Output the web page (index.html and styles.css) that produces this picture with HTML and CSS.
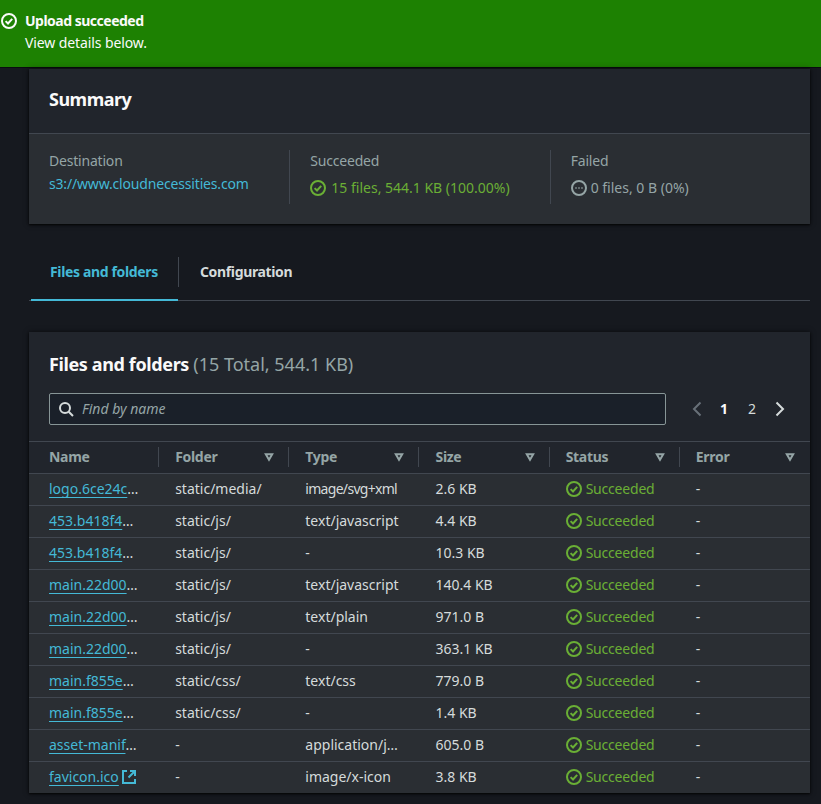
FILE: index.html
```html
<!DOCTYPE html>
<html lang="en">
<head>
<meta charset="utf-8">
<title>Upload: status</title>
<link rel="stylesheet" href="styles.css">
</head>
<body>
<svg class="defs" width="0" height="0" aria-hidden="true">
  <symbol id="i-ok" viewBox="0 0 16 16"><circle cx="8" cy="8" r="7"/><path d="M4.6 8.1l2.4 2.4 4.2-4.6"/></symbol>
  <symbol id="i-filter" viewBox="0 0 16 16"><path d="M4.8 5.2h6.4L8 10.8z"/></symbol>
</svg>
<div class="flash">
  <svg class="icon"><use href="#i-ok"/></svg>
  <div class="flash-text"><strong>Upload succeeded</strong><span>View details below.</span></div>
</div>
<main class="page">
  <section class="card summary">
    <h2 class="card-head">Summary</h2>
    <div class="summary-body">
      <div class="stat">
        <div class="label">Destination</div>
        <a class="link value-link">s3://www.cloudnecessities.com</a>
      </div>
      <div class="stat">
        <div class="label">Succeeded</div>
        <div class="value good"><svg class="icon"><use href="#i-ok"/></svg>15 files, 544.1 KB (100.00%)</div>
      </div>
      <div class="stat">
        <div class="label">Failed</div>
        <div class="value muted"><svg class="icon" viewBox="0 0 16 16"><circle cx="8" cy="8" r="7"/><path class="dots" d="M4.5 8h1M7.5 8h1M10.5 8h1"/></svg>0 files, 0 B (0%)</div>
      </div>
    </div>
  </section>
  <nav class="tabs">
    <div class="tab active">Files and folders</div>
    <div class="tab">Configuration</div>
  </nav>
  <section class="card files">
    <div class="files-head">
      <h2 class="files-title">Files and folders <span>(15 Total, 544.1 KB)</span></h2>
      <div class="tools">
        <div class="search">
          <svg class="icon search-icon" viewBox="0 0 16 16"><circle cx="7" cy="7" r="5"/><path d="M10.7 10.7L15 15"/></svg>
          <span>Find by name</span>
        </div>
        <div class="pager">
          <svg class="chev off" viewBox="0 0 16 16"><path d="M11.5 1.5L5 8l6.5 6.5"/></svg>
          <b>1</b><span>2</span>
          <svg class="chev" viewBox="0 0 16 16"><path d="M4.5 1.5L11 8l-6.5 6.5"/></svg>
        </div>
      </div>
    </div>
    <table class="grid">
      <thead>
        <tr>
          <th>Name</th>
          <th>Folder<svg class="tri"><use href="#i-filter"/></svg></th>
          <th>Type<svg class="tri"><use href="#i-filter"/></svg></th>
          <th>Size<svg class="tri"><use href="#i-filter"/></svg></th>
          <th>Status<svg class="tri"><use href="#i-filter"/></svg></th>
          <th>Error<svg class="tri"><use href="#i-filter"/></svg></th>
        </tr>
      </thead>
      <tbody>
        <tr><td><a class="link">logo.6ce24c</a>…</td><td>static/media/</td><td class="tight">image/svg+xml</td><td>2.6 KB</td><td class="good"><svg class="icon"><use href="#i-ok"/></svg>Succeeded</td><td>-</td></tr>
        <tr><td><a class="link">453.b418f4</a>…</td><td>static/js/</td><td>text/javascript</td><td>4.4 KB</td><td class="good"><svg class="icon"><use href="#i-ok"/></svg>Succeeded</td><td>-</td></tr>
        <tr><td><a class="link">453.b418f4</a>…</td><td>static/js/</td><td>-</td><td>10.3 KB</td><td class="good"><svg class="icon"><use href="#i-ok"/></svg>Succeeded</td><td>-</td></tr>
        <tr><td><a class="link">main.22d00</a>…</td><td>static/js/</td><td>text/javascript</td><td>140.4 KB</td><td class="good"><svg class="icon"><use href="#i-ok"/></svg>Succeeded</td><td>-</td></tr>
        <tr><td><a class="link">main.22d00</a>…</td><td>static/js/</td><td>text/plain</td><td>971.0 B</td><td class="good"><svg class="icon"><use href="#i-ok"/></svg>Succeeded</td><td>-</td></tr>
        <tr><td><a class="link">main.22d00</a>…</td><td>static/js/</td><td>-</td><td>363.1 KB</td><td class="good"><svg class="icon"><use href="#i-ok"/></svg>Succeeded</td><td>-</td></tr>
        <tr><td><a class="link">main.f855e</a>…</td><td>static/css/</td><td>text/css</td><td>779.0 B</td><td class="good"><svg class="icon"><use href="#i-ok"/></svg>Succeeded</td><td>-</td></tr>
        <tr><td><a class="link">main.f855e</a>…</td><td>static/css/</td><td>-</td><td>1.4 KB</td><td class="good"><svg class="icon"><use href="#i-ok"/></svg>Succeeded</td><td>-</td></tr>
        <tr><td><a class="link">asset-manif</a>…</td><td>-</td><td>application/j…</td><td>605.0 B</td><td class="good"><svg class="icon"><use href="#i-ok"/></svg>Succeeded</td><td>-</td></tr>
        <tr><td><a class="link">favicon.ico</a><svg class="ext" viewBox="0 0 16 16"><path d="M6 2H2v12h12v-4"/><path d="M9 2h5v5M14 2L7.5 8.5"/></svg></td><td>-</td><td>image/x-icon</td><td>3.8 KB</td><td class="good"><svg class="icon"><use href="#i-ok"/></svg>Succeeded</td><td>-</td></tr>
      </tbody>
    </table>
  </section>
</main>
</body>
</html>
```
FILE: styles.css
```css
* { box-sizing: border-box; }
html, body { margin: 0; height: 100%; overflow: hidden; }
body {
  background: #16191f;
  color: #d5dbdb;
  font: 14px/22px "Noto Sans", sans-serif;
}
.defs { position: absolute; }
.icon {
  width: 16px;
  height: 16px;
  flex: none;
  fill: none;
  stroke: currentColor;
  stroke-width: 2;
}
.flash {
  display: flex;
  gap: 8px;
  height: 68px;
  padding: 10px 0 0 1px;
  background: #1d8102;
  border-bottom: 1px solid #0a0d10;
  color: #fafafa;
}
.flash .icon { margin-top: 3px; }
.flash-text { display: flex; flex-direction: column; letter-spacing: -.1px; }
.flash-text strong { letter-spacing: -.5px; }
.page { padding: 0 11px 0 29px; }
.card {
  background: #2a2e33;
  box-shadow: 0 1px 2px rgba(0, 0, 0, .8), 0 0 6px rgba(0, 0, 0, .45);
}
.summary { margin-top: 1px; }
.card-head {
  margin: 0;
  height: 65px;
  padding: 19px 20px 0;
  background: #21252c;
  border-bottom: 1px solid #414750;
  color: #fafafa;
  font-size: 18px;
  line-height: 22px;
  letter-spacing: -.5px;
}
.summary-body {
  display: grid;
  grid-template-columns: repeat(3, 1fr);
  height: 90px;
  padding: 16px 0 20px;
}
.stat { padding-left: 20px; }
.stat + .stat { border-left: 1px solid #414750; padding-left: 20px; }
.label { color: #95a5a6; letter-spacing: -.2px; }
.link { color: #44b9d6; text-decoration: underline; text-underline-offset: 3px; }
.value-link { display: block; margin-top: 1px; text-decoration: none; letter-spacing: -.17px; }
.value { display: flex; align-items: center; gap: 5px; margin-top: 5px; }
.muted { gap: 4px; }
.good { color: #6aaf35; }
.muted { color: #95a5a6; }
.dots { stroke-width: 2; }
.tabs {
  display: flex;
  height: 77px;
  padding: 33px 0 0 2px;
  border-bottom: 1px solid #414750;
}
.tab {
  padding: 4px 21px 0 22px;
  height: 44px;
  font-weight: 700;
  letter-spacing: -.35px;
  color: #d5dbdb;
}
.tab.active {
  padding: 4px 20px 0 19px;
  color: #44b9d6;
  border-bottom: 2px solid #44b9d6;
  position: relative;
}
.tab.active::after {
  content: "";
  position: absolute;
  right: -1px;
  top: 0;
  height: 30px;
  border-right: 1px solid #414750;
}
.files { margin-top: 31px; }
.files-head {
  height: 110px;
  padding: 20px 20px 0;
  background: #21252c;
  border-bottom: 1px solid #414750;
}
.files-title {
  margin: 0;
  color: #fafafa;
  font-size: 18px;
  line-height: 24px;
  letter-spacing: -.38px;
}
.files-title span { font-weight: 400; color: #95a5a6; letter-spacing: 0; }
.tools { display: flex; margin-top: 17px; }
.search {
  display: flex;
  flex: none;
  align-items: center;
  gap: 8px;
  width: 617px;
  height: 32px;
  padding-left: 8px;
  background: #1a2029;
  border: 1px solid #879596;
  border-radius: 2px;
  color: #95a5a6;
  font-style: italic;
}
.search-icon { color: #d5dbdb; }
.pager { display: flex; align-items: center; gap: 12px; margin-left: 23px; color: #d5dbdb; }
.pager b { color: #fafafa; margin-left: -1px; }
.pager b, .pager span { width: 16px; text-align: center; font-style: normal; }
.chev { flex: none; width: 16px; height: 16px; fill: none; stroke: #d5dbdb; stroke-width: 2; }
.chev.off { stroke: #687078; }
.grid {
  width: 100%;
  table-layout: fixed;
  border-collapse: collapse;
}
.grid th {
  position: relative;
  height: 31px;
  padding: 0 0 0 16px;
  text-align: left;
  color: #95a5a6;
  background: #21252c;
  border-bottom: 1px solid #414750;
  font-weight: 700;
  letter-spacing: -.3px;
}
.grid th:first-child, .grid td:first-child { padding-left: 20px; }
.grid th::after {
  content: "";
  position: absolute;
  right: 0;
  top: 5px;
  height: 20px;
  border-right: 1px solid #414750;
}
.grid th:last-child::after { display: none; }
.tri {
  position: absolute;
  right: 12px;
  top: 7px;
  width: 16px;
  height: 16px;
  fill: none;
  stroke: #95a5a6;
  stroke-width: 2;
}
.grid td {
  height: 32px;
  padding: 0 0 0 16px;
  white-space: nowrap;
  overflow: hidden;
  border-bottom: 1px solid #414750;
}
.grid tr:last-child td { border-bottom: 0; }
.grid td.good { letter-spacing: -.2px; }
.grid td.tight { letter-spacing: -.7px; }
.grid td .icon { vertical-align: -3px; margin-right: 4px; }
.ext {
  width: 16px;
  height: 16px;
  margin-left: 2px;
  vertical-align: -3px;
  fill: none;
  stroke: #44b9d6;
  stroke-width: 2;
}
```
